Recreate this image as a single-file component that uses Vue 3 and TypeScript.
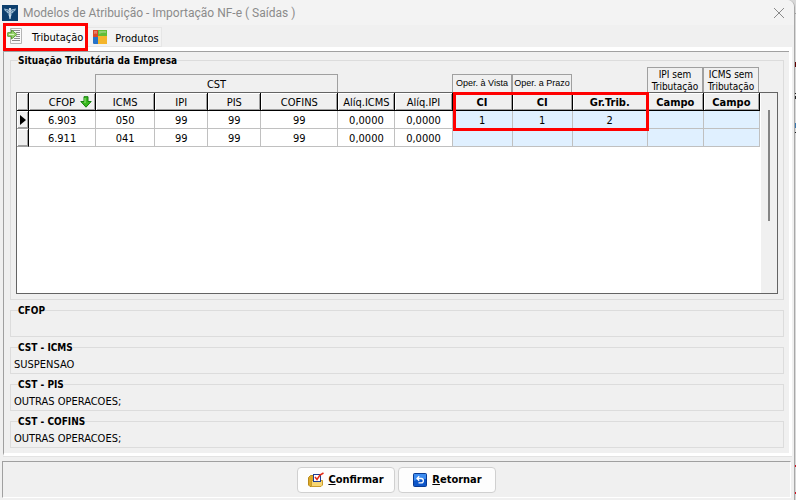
<script setup lang="ts">
import { ref } from 'vue'

interface Row {
  cfop: string
  icms: string
  ipi: string
  pis: string
  cofins: string
  aliqIcms: string
  aliqIpi: string
  vista: string
  prazo: string
  grupo: string
}

interface Detail {
  title: string
  text: string
}

const rows: Row[] = [
  { cfop: '6.903', icms: '050', ipi: '99', pis: '99', cofins: '99', aliqIcms: '0,0000', aliqIpi: '0,0000', vista: '1', prazo: '1', grupo: '2' },
  { cfop: '6.911', icms: '041', ipi: '99', pis: '99', cofins: '99', aliqIcms: '0,0000', aliqIpi: '0,0000', vista: '', prazo: '', grupo: '' },
]

const details: Detail[] = [
  { title: 'CFOP', text: '' },
  { title: 'CST - ICMS', text: 'SUSPENSAO' },
  { title: 'CST - PIS', text: 'OUTRAS OPERACOES;' },
  { title: 'CST - COFINS', text: 'OUTRAS OPERACOES;' },
]

const selected = ref(0)
</script>

<template>
  <div class="window">
    <header class="titlebar">
      <svg class="app-icon" viewBox="0 0 16 16" aria-hidden="true">
        <rect width="16" height="16" fill="#0d3f6e" />
        <path d="M2 3.5 6.5 4.5 8 6 9.5 4.5 14 3.5 13 6 11.5 6.5 11 8 9.5 8.5 9.5 10 8 14 6.5 10V8.5L5 8 4.5 6.5 3 6Z" fill="#a9c6dc" />
        <path d="M3.5 5 6.5 6 8 8 9.5 6 12.5 5M6 7.5 8 9.5 10 7.5" fill="none" stroke="#0d3f6e" stroke-width=".6" />
        <circle cx="8" cy="4" r="1.1" fill="#fff" />
        <path d="M8 5V14" stroke="#e6f0f7" />
      </svg>
      <h1>Modelos de Atribuição - Importação NF-e ( Saídas )</h1>
      <button class="close" type="button" aria-label="Fechar">
        <svg viewBox="0 0 12 12"><path d="M1 1 11 11M11 1 1 11" stroke="#8a8a8a" fill="none" /></svg>
      </button>
    </header>

    <nav class="tabs" role="tablist">
      <button class="tab active" type="button" role="tab" aria-selected="true">
        <svg viewBox="0 0 16 16" aria-hidden="true">
          <path d="M3.5.5H14.5V15.5H3.5Z" fill="#fafafa" stroke="#b5b5b5" />
          <path d="M5 2.5H13M9 4.5H13M10 6.5H13M9 8.5H13M7 10.5H13M5 12.5H13" stroke="#8c8c8c" />
          <path d="M.7 4.7H4.5V2L10 6.5 4.5 11V8.3H.7Z" fill="#97d36b" stroke="#5a9c37" />
          <path d="M2 6.5H7" stroke="#d9f4c4" />
        </svg>
        <span>Tributação</span>
      </button>
      <button class="tab" type="button" role="tab" aria-selected="false">
        <svg viewBox="0 0 16 16" aria-hidden="true">
          <rect x="1" y="1" width="14" height="14" rx="1" fill="#9f9f9f" />
          <path d="M1 1H6V8H1Z" fill="#dd4727" />
          <path d="M6 1H15V7H6Z" fill="#62bd37" />
          <path d="M1 8H6V15H2L1 14Z" fill="#2673ca" />
          <path d="M6 7H15V15H6Z" fill="#f4b52b" />
          <path d="M2 2H5V5Q4 4 2 5ZM7 2H14V4Q11 3 7 5Z" fill="#fff" opacity=".3" />
        </svg>
        <span>Produtos</span>
      </button>
    </nav>

    <main class="panel">
      <fieldset class="group main-group">
        <legend>Situação Tributária da Empresa</legend>
        <div class="bands">
          <div class="band cst">CST</div>
          <div class="band vista">Oper. à Vista</div>
          <div class="band prazo">Oper. a Prazo</div>
          <div class="band tall ipi">IPI sem Tributação</div>
          <div class="band tall icms">ICMS sem Tributação</div>
        </div>
        <div class="grid">
          <div class="sheet">
            <table>
              <colgroup>
                <col class="c12" /><col class="c67" /><col class="c59" /><col class="c53" /><col class="c53" />
                <col class="c77" /><col class="c57" /><col class="c57" /><col class="c60" /><col class="c60" />
                <col class="c75" /><col class="c56" /><col class="c56" />
              </colgroup>
              <thead>
                <tr>
                  <th></th>
                  <th class="sorted">
                    CFOP<svg viewBox="0 0 12 12" aria-hidden="true">
                      <path d="M4 .7H8V5.5H11.2L6 11.2.8 5.5H4Z" fill="#39b81f" stroke="#16800f" />
                      <path d="M5 2V7" stroke="#98e67d" />
                    </svg>
                  </th>
                  <th>ICMS</th>
                  <th>IPI</th>
                  <th>PIS</th>
                  <th>COFINS</th>
                  <th>Alíq.ICMS</th>
                  <th>Alíq.IPI</th>
                  <th class="strong">CI</th>
                  <th class="strong">CI</th>
                  <th class="strong">Gr.Trib.</th>
                  <th class="strong">Campo</th>
                  <th class="strong">Campo</th>
                </tr>
              </thead>
              <tbody>
                <tr v-for="(row, i) in rows" :key="row.cfop" @click="selected = i">
                  <td class="marker">
                    <svg v-if="i === selected" viewBox="0 0 6 10" aria-hidden="true"><path d="M0 0 6 5 0 10Z" /></svg>
                  </td>
                  <td>{{ row.cfop }}</td>
                  <td>{{ row.icms }}</td>
                  <td>{{ row.ipi }}</td>
                  <td>{{ row.pis }}</td>
                  <td>{{ row.cofins }}</td>
                  <td>{{ row.aliqIcms }}</td>
                  <td>{{ row.aliqIpi }}</td>
                  <td class="edit">{{ row.vista }}</td>
                  <td class="edit">{{ row.prazo }}</td>
                  <td class="edit">{{ row.grupo }}</td>
                  <td class="edit"></td>
                  <td class="edit"></td>
                </tr>
              </tbody>
            </table>
          </div>
          <div class="track"><div class="thumb"></div></div>
          <div class="highlight"></div>
        </div>
      </fieldset>

      <fieldset v-for="d in details" :key="d.title" class="group detail">
        <legend>{{ d.title }}</legend>
        <p>{{ d.text }}</p>
      </fieldset>
    </main>

    <footer class="actions">
      <button class="action" type="button">
        <svg viewBox="0 0 16 16" aria-hidden="true">
          <path d="M.5 5.5 2.5 3.5H6L7 5H12.5V14.5H2L.5 13Z" fill="#dca928" stroke="#b98a1c" />
          <path d="M3.5 8.5H14.5V13L13 14.5H3.5Z" fill="#f7d673" stroke="#c99c2c" />
          <rect x="5.5" y="2.5" width="7" height="7" fill="#fff" stroke="#1d3e94" />
          <path d="M7 5 9 7.5 12 3 15.5 1" stroke="#e32b17" stroke-width="1.5" fill="none" />
        </svg>
        <span><u>C</u>onfirmar</span>
      </button>
      <button class="action" type="button">
        <svg viewBox="0 0 16 16" aria-hidden="true">
          <rect x="1.5" y="1.5" width="13" height="13" rx="1" fill="#0d55c8" stroke="#0a3a91" />
          <path d="M2 2H14V7Q8 6 2 9Z" fill="#3d8cf0" />
          <path d="M5 6.5H9.2A2 2 0 0 1 9.2 10.8H6.5M7.2 4.2 5 6.5 7.2 8.8" fill="none" stroke="#fff" stroke-width="1.3" />
        </svg>
        <span><u>R</u>etornar</span>
      </button>
    </footer>
  </div>
</template>

<style>
/* Edge of the window behind the dialog: its text, rules and red frames. */
body {
  background: linear-gradient(
    #d8d8d8 13px, #a0a0a0 13px 14px, #d8d8d8 14px 62px,
    #600000 62px 67px, #d8d8d8 67px 93px,
    #202020 93px 94px, #d8d8d8 94px 96px, #202020 96px 99px, #d8d8d8 99px 123px,
    #3a78b0 123px 128px, #d8d8d8 128px 132px, #202020 132px 133px, #d8d8d8 133px 465px,
    #d01020 465px 467px, #d8d8d8 467px 492px, #d01020 492px 494px, #d8d8d8 494px
  );
}
</style>

<style scoped>
.window {
  display: flex;
  flex-direction: column;
  box-sizing: border-box;
  min-height: 100vh;
  margin-right: 1px;
  border-right: 1px solid #a8a8a8;
  border-radius: 0 7px 0 0;
  background: #f0f0f0;
  color: #000;
  font: 11px/14px "DejaVu Sans Condensed", "Noto Sans", sans-serif;
}
button {
  font: inherit;
  color: inherit;
}
.titlebar {
  display: flex;
  align-items: center;
  gap: 5px;
  height: 25px;
  padding: 0 9px 0 2px;
  border-radius: 0 7px 0 0;
  background: #f3f3f3;
}
.app-icon {
  width: 16px;
  height: 16px;
}
h1 {
  flex: 1;
  margin: 0;
  color: #8b8b8b;
  font: 12px/16px Roboto, "Noto Sans", sans-serif;
}
.close {
  display: flex;
  padding: 0;
  border: 0;
  background: none;
}
.close svg {
  width: 12px;
  height: 12px;
}
.tabs {
  display: flex;
  align-items: flex-end;
  height: 22px;
  padding-left: 3px;
}
.tab {
  display: flex;
  align-items: center;
  gap: 7px;
  height: 20px;
  padding: 0 2px 0 4px;
  border: 1px solid #e6e6e6;
  border-left: 0;
  background: #f3f3f3;
  white-space: nowrap;
}
.tab svg {
  width: 16px;
  height: 16px;
}
.tab span {
  padding-top: 4px;
}
.tab.active {
  position: relative;
  z-index: 1;
  gap: 9px;
  height: 28px;
  margin-bottom: -4px;
  padding: 0 2px 0 1px;
  border: 3px solid #f00;
  background: #f9f9f9;
}
.tab.active svg {
  margin-bottom: 2px;
}
.tab.active span {
  padding-top: 2px;
}
.panel {
  display: flex;
  flex-direction: column;
  flex: 1;
  gap: 3px;
  margin: 0 2px 0 3px;
  padding: 2px 5px 3px 6px;
  border-top: 4px solid #fff;
  border-right: 3px solid #fff;
  border-bottom: 3px solid #fff;
  border-left: 1px solid #a0a0a0;
  box-shadow: inset 0 1px #a0a0a0, 0 1px #e3e3e3;
}
.group {
  min-width: 0;
  margin: 0;
  padding: 0 3px;
  border: 1px solid #dcdcdc;
}
legend {
  padding: 2px 0 0;
  margin-left: 2px;
  font-weight: bold;
  font-size: 10px;
  line-height: 12px;
}
.detail legend {
  margin-left: 4px;
}
.main-group {
  padding: 0 5px 5px;
}
.bands,
table {
  width: 743px;
}
.bands {
  display: grid;
  grid-template-columns: 12px 67px 59px 53px 53px 77px 57px 57px 60px 60px 75px 56px 56px;
  align-items: end;
  height: 25px;
  margin-left: 1px;
  text-align: center;
}
.band {
  box-sizing: border-box;
  height: 20px;
  border: 1px solid #a0a0a0;
  border-bottom: 0;
  line-height: 20px;
  white-space: nowrap;
}
.cst {
  grid-column: 3 / 7;
  margin-left: -1px;
}
.vista { grid-column: 9; }
.prazo { grid-column: 10; }
.ipi { grid-column: 12; }
.icms { grid-column: 13; }
.vista,
.prazo {
  font: 9px/16px "Liberation Sans", sans-serif;
}
.tall {
  height: 27px;
  padding-top: 1px;
  font-size: 10px;
  line-height: 12px;
  white-space: normal;
}
.grid {
  position: relative;
  display: flex;
  height: 200px;
  border: 1px solid #646464;
  background: #fff;
}
.sheet {
  flex: 1;
  min-width: 0;
}
table {
  border-collapse: separate;
  border-spacing: 0;
  table-layout: fixed;
}
.c12 { width: 12px; }
.c53 { width: 53px; }
.c56 { width: 56px; }
.c57 { width: 57px; }
.c59 { width: 59px; }
.c60 { width: 60px; }
.c67 { width: 67px; }
.c75 { width: 75px; }
.c77 { width: 77px; }
th,
td {
  box-sizing: border-box;
  height: 18px;
  padding: 2px 0 0;
  border: solid #c0c0c0;
  border-width: 0 1px 1px 0;
  font-weight: normal;
  line-height: 14px;
  text-align: center;
  white-space: nowrap;
}
th,
.marker {
  border-color: #000;
  background: #f0f0f0;
  box-shadow: inset 1px 1px #fff, inset -1px -1px #a0a0a0;
}
.marker {
  padding: 0;
  border-bottom-color: #a0a0a0;
}
.marker svg {
  display: block;
  width: 6px;
  height: 10px;
  margin-left: 3px;
}
.sorted {
  padding-right: 3px;
  text-align: right;
}
.sorted svg {
  width: 12px;
  height: 12px;
  margin-left: 5px;
  vertical-align: -2px;
}
.strong {
  font-weight: bold;
}
.edit {
  background: #e0f0ff;
}
.track {
  width: 16px;
  background: #f0f0f0;
}
.thumb {
  width: 2px;
  height: 111px;
  margin: 17px 0 0 7px;
  background: #858585;
}
.highlight {
  position: absolute;
  top: -1px;
  left: 436px;
  box-sizing: border-box;
  width: 196px;
  height: 39px;
  border: 3px solid #f00;
}
.detail p {
  height: 19px;
  margin: 0;
  line-height: 22px;
}
.actions {
  display: flex;
  justify-content: center;
  gap: 3px;
  margin: 5px 3px 2px 2px;
  padding: 5px 0 4px;
  border: 1px solid #fff;
  border-top-color: #a0a0a0;
  border-left-color: #a0a0a0;
}
.action {
  display: flex;
  align-items: center;
  justify-content: center;
  gap: 4px;
  width: 98px;
  height: 26px;
  padding: 0;
  border: 1px solid #d0d0d0;
  border-radius: 4px;
  background: #fdfdfd;
  font-weight: bold;
}
.action svg {
  width: 16px;
  height: 16px;
}
</style>
